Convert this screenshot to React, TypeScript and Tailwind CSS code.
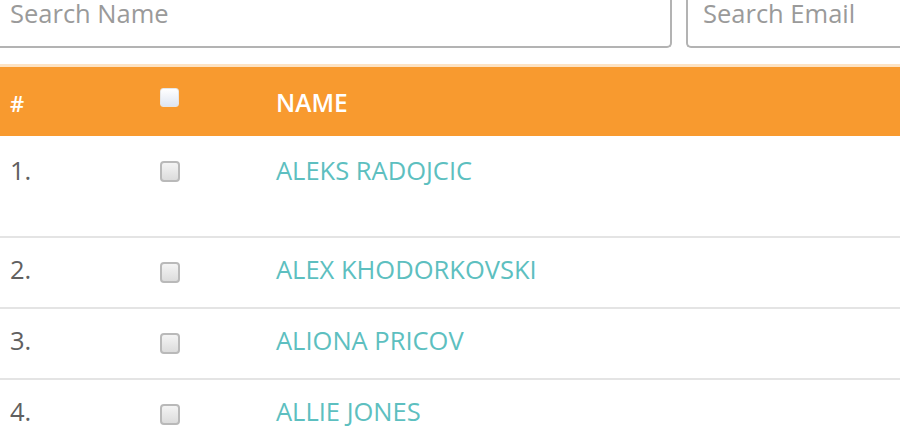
import React from 'react';

const people = [
  { id: 1, name: 'ALEKS RADOJCIC', tall: true },
  { id: 2, name: 'ALEX KHODORKOVSKI' },
  { id: 3, name: 'ALIONA PRICOV' },
  { id: 4, name: 'ALLIE JONES' },
];

function Box({ header = false }: { header?: boolean }) {
  return (
    <span
      className={
        header
          ? 'inline-block w-[19px] h-[19px] rounded-[3px] border border-[#e6e6e6] bg-gradient-to-b from-[#ffffff] to-[#dfe6f2]'
          : 'inline-block w-[20px] h-[21px] rounded-[4px] border-2 border-[#b9b9b9] bg-gradient-to-b from-[#f4f4f4] to-[#dcdcdc]'
      }
    />
  );
}

export default function App() {
  return (
    <div className="w-[900px] h-[444px] overflow-hidden bg-white font-['Open_Sans',sans-serif]">
      {/* Search inputs (top edge cropped in the shot) */}
      <div className="h-[48px] flex gap-[14px]">
        <div className="w-[672px] h-[48px] shrink-0 border-b-2 border-r-2 border-[#b3b3b3] rounded-br-[5px] bg-white pl-[10px]">
          <span className="block text-[25.5px] leading-[26px] text-[#9a9a9a]">Search Name</span>
        </div>
        <div className="flex-1 h-[48px] border-b-2 border-l-2 border-[#b3b3b3] rounded-bl-[5px] bg-white pl-[15px]">
          <span className="block text-[25.5px] leading-[26px] text-[#9a9a9a]">Search Email</span>
        </div>
      </div>

      <div className="h-[16px]" />

      {/* Table header */}
      <div className="border-t-[3px] border-[#fde3c4] bg-[#f89a2f] h-[72px] grid grid-cols-[150px_116px_1fr] items-center text-white">
        <div className="pl-[10px] text-[22px] font-semibold pt-[3px]">#</div>
        <div className="pl-[10px] pb-[8px] flex">
          <Box header />
        </div>
        <div className="pl-[10px] text-[24.5px] font-semibold pt-[3px]">NAME</div>
      </div>

      {/* Rows */}
      {people.map((p) => (
        <div
          key={p.id}
          className={`grid grid-cols-[150px_116px_1fr] items-start border-b-2 border-[#e4e4e4] ${p.tall ? 'h-[102px] pt-[18px]' : 'h-[71px] pt-[15px]'}`}
        >
          <div className="pl-[10px] text-[25.5px] leading-[33px] text-[#606060]">{p.id}.</div>
          <div className={`pl-[10px] flex ${p.tall ? 'pt-[7px]' : 'pt-[9px]'}`}>
            <Box />
          </div>
          <div className="pl-[10px] text-[25.5px] leading-[33px] text-[#5dbfc0]">{p.name}</div>
        </div>
      ))}
    </div>
  );
}
